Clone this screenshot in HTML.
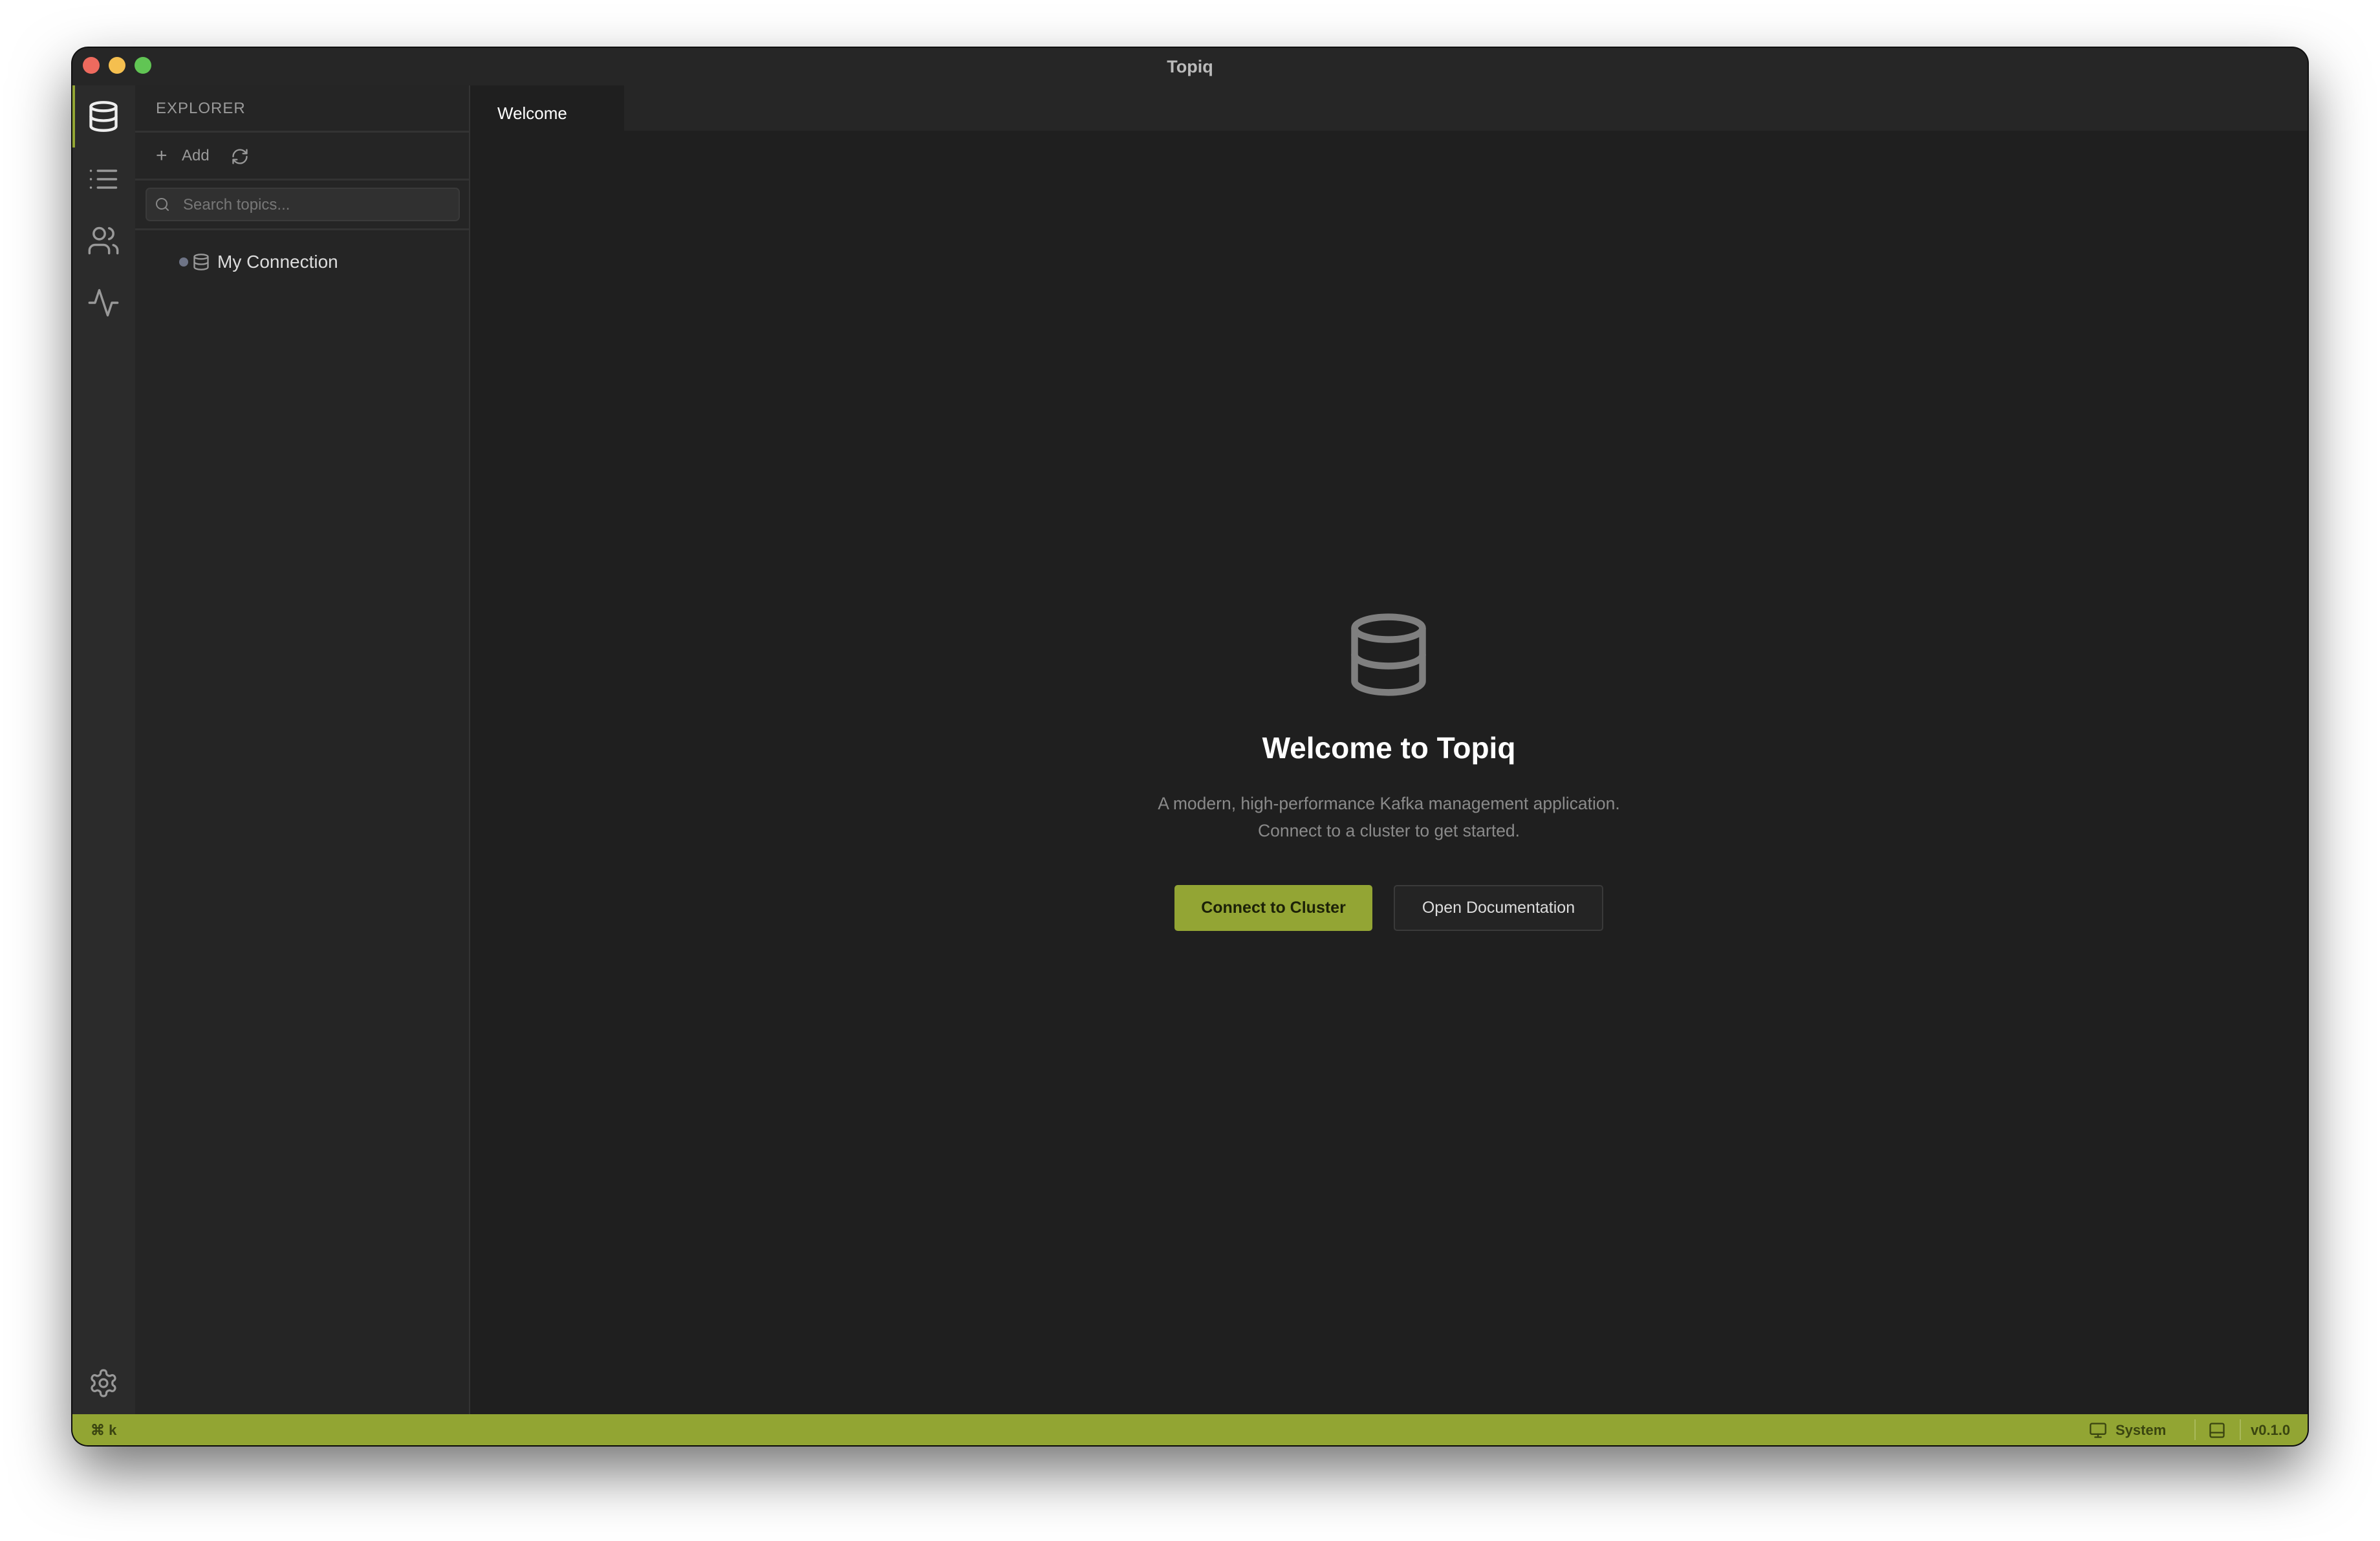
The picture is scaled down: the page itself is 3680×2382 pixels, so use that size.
<!DOCTYPE html>
<html><head><meta charset="utf-8"><style>
*{box-sizing:border-box;margin:0;padding:0}
body{width:3680px;height:2382px;background:#fff;position:relative;overflow:hidden;font-family:"Liberation Sans",sans-serif}
.win{position:absolute;left:112px;top:74px;width:3456px;height:2160px;border-radius:24px;background:#1f1f1f;overflow:hidden;box-shadow:0 40px 90px rgba(0,0,0,.55),0 0 0 2px #111}
.abs{position:absolute}
.tb{left:0;top:0;width:100%;height:58px;background:#262626}
.dot{position:absolute;top:14px;width:26px;height:26px;border-radius:50%}
.ttl{left:0;width:100%;top:14px;text-align:center;color:#bbb;font-weight:bold;font-size:27px}
.act{left:0;top:58px;width:97px;height:2054px;background:#2b2b2b}
.exp{left:97px;top:58px;width:518px;height:2054px;background:#252525;border-right:2px solid #333}
.hl{position:absolute;left:0;width:100%;height:3px;background:#333}
.tabbar{left:615px;top:58px;right:0;height:70px;background:#262626}
.tab{left:615px;top:58px;width:238px;height:70px;background:#1f1f1f;color:#fff;font-size:26px;padding:28px 0 0 42px}
.status{left:0;top:2112px;width:100%;height:48px;background:#92a533;color:#3a4510;font-weight:bold;font-size:22px}
svg{position:absolute;fill:none;stroke-linecap:round;stroke-linejoin:round}
</style></head><body>
<div class="win">
 <div class="abs tb"></div>
 <div class="dot" style="left:16px;background:#ee6a5e"></div>
 <div class="dot" style="left:56px;background:#f5bf4f"></div>
 <div class="dot" style="left:96px;background:#61c554"></div>
 <div class="abs ttl">Topiq</div>

 <div class="abs act"></div>
 <div class="abs" style="left:0;top:58px;width:4px;height:96px;background:#92a533"></div>
 <svg style="left:22px;top:80px" width="52" height="52" viewBox="0 0 24 24" stroke="#eee" stroke-width="2"><ellipse cx="12" cy="5" rx="9" ry="3"/><path d="M3 5v14a9 3 0 0 0 18 0V5"/><path d="M3 12a9 3 0 0 0 18 0"/></svg>
 <svg style="left:22px;top:177px" width="52" height="52" viewBox="0 0 24 24" stroke="#999" stroke-width="1.6"><path d="M8 6h13M8 12h13M8 18h13M3 6h.01M3 12h.01M3 18h.01"/></svg>
 <svg style="left:22px;top:272px" width="52" height="52" viewBox="0 0 24 24" stroke="#999" stroke-width="1.6"><path d="M16 21v-2a4 4 0 0 0-4-4H6a4 4 0 0 0-4 4v2"/><circle cx="9" cy="7" r="4"/><path d="M22 21v-2a4 4 0 0 0-3-3.87M16 3.13a4 4 0 0 1 0 7.75"/></svg>
 <svg style="left:22px;top:368px" width="52" height="52" viewBox="0 0 24 24" stroke="#999" stroke-width="1.6"><path d="M22 12h-4l-3 9L9 3l-3 9H2"/></svg>
 <svg style="left:24px;top:2040px" width="48" height="48" viewBox="0 0 24 24" stroke="#999" stroke-width="1.6"><path d="M12.22 2h-.44a2 2 0 0 0-2 2v.18a2 2 0 0 1-1 1.73l-.43.25a2 2 0 0 1-2 0l-.15-.08a2 2 0 0 0-2.730.73l-.22.38a2 2 0 0 0 .73 2.73l.15.1a2 2 0 0 1 1 1.72v.51a2 2 0 0 1-1 1.74l-.15.09a2 2 0 0 0-.73 2.73l.22.38a2 2 0 0 0 2.73.73l.15-.08a2 2 0 0 1 2 0l.43.25a2 2 0 0 1 1 1.73V20a2 2 0 0 0 2 2h.44a2 2 0 0 0 2-2v-.18a2 2 0 0 1 1-1.73l.43-.25a2 2 0 0 1 2 0l.15.08a2 2 0 0 0 2.73-.73l.22-.39a2 2 0 0 0-.73-2.730l-.15-.08a2 2 0 0 1-1-1.74v-.5a2 2 0 0 1 1-1.74l.15-.09a2 2 0 0 0 .73-2.73l-.22-.38a2 2 0 0 0-2.73-.73l-.15.08a2 2 0 0 1-2 0l-.43-.25a2 2 0 0 1-1-1.73V4a2 2 0 0 0-2-2z"/><circle cx="12" cy="12" r="3"/></svg>

 <div class="abs exp">
  <div class="abs" style="left:32px;top:22px;color:#9a9a9a;font-size:24px;letter-spacing:1px">EXPLORER</div>
  <div class="hl" style="top:70px"></div>
  <div class="abs" style="left:32px;top:92px;color:#999;font-size:30px">+</div>
  <div class="abs" style="left:72px;top:95px;color:#999;font-size:24px">Add</div>
  <svg style="left:148px;top:96px" width="28" height="28" viewBox="0 0 24 24" stroke="#999" stroke-width="2"><path d="M3 12a9 9 0 0 1 9-9 9.75 9.75 0 0 1 6.74 2.74L21 8M21 3v5h-5M21 12a9 9 0 0 1-9 9 9.75 9.75 0 0 1-6.74-2.74L3 16M8 16H3v5"/></svg>
  <div class="hl" style="top:144px"></div>
  <div class="abs" style="left:16px;top:158px;width:486px;height:52px;background:#303030;border:2px solid #3a3a3a;border-radius:7px"></div>
  <svg style="left:30px;top:172px" width="24" height="24" viewBox="0 0 24 24" stroke="#888" stroke-width="2"><circle cx="11" cy="11" r="8"/><path d="m21 21-4.3-4.3"/></svg>
  <div class="abs" style="left:74px;top:171px;color:#777;font-size:24px">Search topics...</div>
  <div class="hl" style="top:221px"></div>
  <div class="abs" style="left:68px;top:266px;width:14px;height:14px;border-radius:50%;background:#6e7486"></div>
  <svg style="left:88px;top:259px" width="28" height="28" viewBox="0 0 24 24" stroke="#999" stroke-width="2"><ellipse cx="12" cy="5" rx="9" ry="3"/><path d="M3 5v14a9 3 0 0 0 18 0V5"/><path d="M3 12a9 3 0 0 0 18 0"/></svg>
  <div class="abs" style="left:127px;top:257px;color:#ddd;font-size:28px">My Connection</div>
 </div>

 <div class="abs tabbar"></div>
 <div class="abs tab">Welcome</div>

 <svg style="left:1965px;top:868px" width="140" height="140" viewBox="0 0 24 24" stroke="#7f7f7f" stroke-width="1.8"><ellipse cx="12" cy="5" rx="9" ry="3"/><path d="M3 5v14a9 3 0 0 0 18 0V5"/><path d="M3 12a9 3 0 0 0 18 0"/></svg>
 <div class="abs" style="left:615px;width:2841px;top:1055px;text-align:center;color:#fff;font-weight:bold;font-size:46px">Welcome to Topiq</div>
 <div class="abs" style="left:615px;width:2841px;top:1147px;text-align:center;color:#8a8a8a;font-size:26.5px;line-height:42px">A modern, high-performance Kafka management application.<br>Connect to a cluster to get started.</div>
 <div class="abs" style="left:1704px;top:1294px;width:306px;height:71px;background:#93a534;border-radius:5px;color:#1c2108;font-weight:bold;font-size:25px;text-align:center;line-height:71px">Connect to Cluster</div>
 <div class="abs" style="left:2043px;top:1294px;width:324px;height:71px;background:#242424;border:2px solid #3a3a3a;border-radius:5px;color:#ddd;font-size:25px;text-align:center;line-height:67px">Open Documentation</div>

 <div class="abs status">
  <div class="abs" style="left:28px;top:12px">⌘ k</div>
  <svg style="left:3118px;top:11px" width="28" height="28" viewBox="0 0 24 24" stroke="#3a4510" stroke-width="2"><rect x="2" y="3" width="20" height="14" rx="2"/><path d="M8 21h8M12 17v4"/></svg>
  <div class="abs" style="left:3159px;top:12px">System</div>
  <div class="abs" style="left:3281px;top:8px;width:2px;height:32px;background:#a9b95a"></div>
  <svg style="left:3302px;top:11px" width="28" height="28" viewBox="0 0 24 24" stroke="#3a4510" stroke-width="2"><rect x="3" y="3" width="18" height="18" rx="2"/><path d="M3 15h18"/></svg>
  <div class="abs" style="left:3351px;top:8px;width:2px;height:32px;background:#a9b95a"></div>
  <div class="abs" style="left:3368px;top:12px">v0.1.0</div>
 </div>
</div>
</body></html>
